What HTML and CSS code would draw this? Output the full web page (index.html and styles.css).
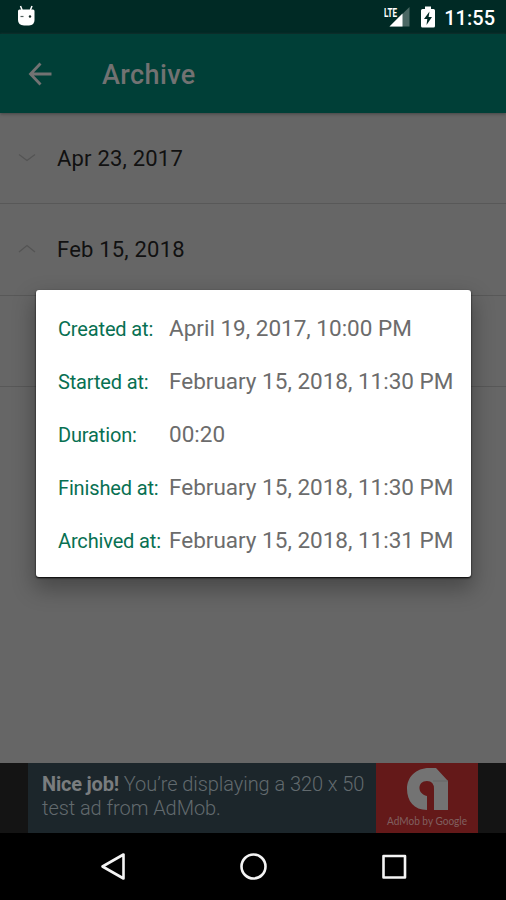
FILE: index.html
```html
<!DOCTYPE html>
<html lang="en">
<head>
<meta charset="utf-8">
<title>Archive</title>
<link rel="stylesheet" href="styles.css">
</head>
<body>
<div class="screen">
  <header class="status">
    <svg class="droid" width="20" height="22" viewBox="0 0 20 22"><path d="M3.500 1l1.600 4M15 1l-1.600 4" stroke="#fff" stroke-width="1.500"/><path d="M1 6Q1 4.500 2.500 4.500H16Q17.500 4.500 17.500 6V15Q17.500 20 12 20.500H7Q1 20 1 15Z" fill="#fff"/><path d="M3.500 11.500h3" stroke="#53615f" stroke-width="1.200"/><circle cx="13" cy="11.500" r="1.200" fill="#142824"/></svg>
    <div class="status-right">
      <svg width="27" height="24" viewBox="0 0 27 24"><path d="M25.500 2v19.500H5.500Z" fill="#4b6864"/><path d="M18.500 8.500v13H5.500Z" fill="#fff"/><rect x="0" y="1" width="14" height="12" fill="#002a25"/><text class="lte" x="0" y="11.500" textLength="13" lengthAdjust="spacingAndGlyphs">LTE</text></svg>
      <svg class="battery" width="14" height="22" viewBox="0 0 14 22"><path d="M4 0.500H10V3H12.500Q14 3 14 4.500V20Q14 21.500 12.500 21.500H1.500Q0 21.500 0 20V4.500Q0 3 1.500 3H4Z" fill="#fff"/><path d="M8.500 5.500L3 13h3.300l-.8 6 5.500-8H7.600Z" fill="#002a25"/></svg>
      <span class="clock">11:55</span>
    </div>
  </header>
  <div class="toolbar">
    <svg class="back" width="24" height="24" viewBox="0 0 24 24"><path d="M23.500 12H3M12.500 1.500L2.500 12l10 10.500" fill="none" stroke="#727272" stroke-width="2.800"/></svg>
    <h1>Archive</h1>
  </div>
  <main class="list">
    <div class="row"><svg width="18" height="10" viewBox="0 0 18 10"><path d="M1 1.500l8 6 8-6" fill="none" stroke="#545454" stroke-width="1.200"/></svg><span>Apr 23, 2017</span></div>
    <div class="row"><svg width="18" height="10" viewBox="0 0 18 10"><path d="M1 8l8-6.500L17 8" fill="none" stroke="#545454" stroke-width="1.200"/></svg><span>Feb 15, 2018</span></div>
    <div class="row"></div>
  </main>
  <div class="ad">
    <div class="ad-copy"><span class="line1"><b>Nice job!</b> You’re displaying a 320 x 50</span><span class="line2">test ad from AdMob.</span></div>
    <div class="ad-logo">
      <svg width="102" height="70" viewBox="0 0 102 70"><path d="M53 5H60L72 18V47H58V26Q58 18 51 18C41 18 41 31 51 33V47C38 47 31 38 31 26C31 14 40 5 53 5Z" fill="#737373"/><path d="M57 18H72" stroke="#666" stroke-width="1"/><text class="admob" x="11" y="62" textLength="80" lengthAdjust="spacingAndGlyphs">AdMob by Google</text></svg>
    </div>
  </div>
  <nav class="nav">
    <svg width="506" height="67" viewBox="0 0 506 67" fill="none" stroke="#f4f4f4" stroke-width="2.600" stroke-linejoin="round"><path d="M123.500 21.500V45.500L102.500 33.500Z"/><circle cx="253.500" cy="33.500" r="12"/><rect x="383.500" y="23" width="21.500" height="21.500"/></svg>
  </nav>
  <dl class="dialog">
    <dt>Created at:</dt><dd>April 19, 2017, 10:00 PM</dd>
    <dt>Started at:</dt><dd>February 15, 2018, 11:30 PM</dd>
    <dt>Duration:</dt><dd>00:20</dd>
    <dt>Finished at:</dt><dd>February 15, 2018, 11:30 PM</dd>
    <dt>Archived at:</dt><dd>February 15, 2018, 11:31 PM</dd>
  </dl>
</div>
</body>
</html>
```
FILE: styles.css
```css
* { box-sizing: border-box; }
body { margin: 0; font-family: Roboto, "Liberation Sans", sans-serif; }
svg { display: block; flex: none; }
.screen { position: relative; width: 506px; height: 900px; display: flex; flex-direction: column; overflow: hidden; background: #666; }
.status { height: 34px; background: #002a25; display: flex; justify-content: space-between; padding: 5px 11px 0 17px; }
.status-right { display: flex; color: #fff; }
.lte { font: 700 13px Roboto, sans-serif; fill: #fff; }
.battery { margin: 1px 0 0 10px; }
.clock { margin-left: 9px; font-size: 20px; line-height: 26px; font-weight: 500; letter-spacing: 0; }
.toolbar { height: 79px; background: #003f37; display: flex; align-items: center; padding-left: 28px; box-shadow: 0 1px 3px #444; z-index: 1; }
.toolbar h1 { margin: 2px 0 0 50px; font-size: 27px; line-height: 32px; font-weight: 500; letter-spacing: .4px; color: #727272; }
.list { flex: 1; }
.row { height: 91.300px; border-bottom: 1px solid #585858; display: flex; align-items: center; gap: 21px; padding-left: 18px; font-size: 22px; color: #111; letter-spacing: .2px; }
.ad { height: 70px; display: flex; padding: 0 28px; background: #141414; }
.ad-copy { width: 348px; padding: 9px 0 0 14px; background: #1c262b; color: #626a6e; font-size: 20px; line-height: 24px; font-weight: 300; white-space: nowrap; letter-spacing: -.06px; }
.ad-copy span { display: block; }
.ad-copy b { color: #7a7d7f; font-weight: 700; letter-spacing: -.2px; }
.ad-logo { width: 102px; background: #641919; }
.admob { font: 400 11px Lato, sans-serif; fill: #806060; }
.nav { height: 67px; background: #000; }
.dialog { position: absolute; z-index: 2; left: 36px; top: 290px; width: 435px; height: 287px; margin: 0; padding: 12px 0 0 22px; display: grid; grid-template-columns: 111px 1fr; grid-auto-rows: 53px; align-items: center; white-space: nowrap; background: #fff; border-radius: 3px; box-shadow: 0 1px 2px #000, 0 10px 22px 2px rgba(0,0,0,.3); }
.dialog dt { color: #087052; font-size: 20px; letter-spacing: -.15px; padding-top: 1px; }
.dialog dd { margin: 0; padding-bottom: 2px; color: #6c6c6c; font-size: 22.500px; }
```
